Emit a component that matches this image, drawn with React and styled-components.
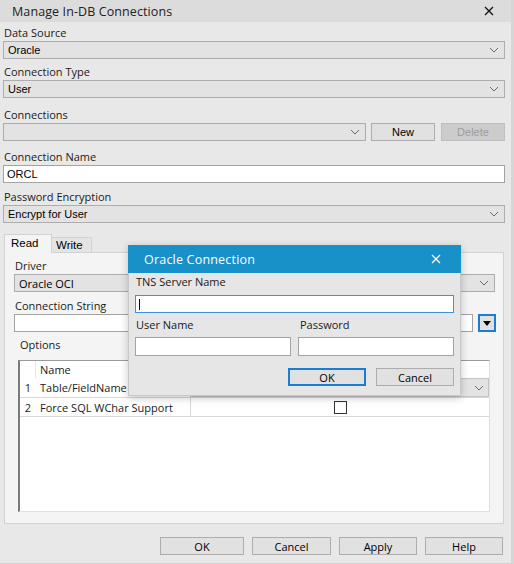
import React from 'react'
import styled, { createGlobalStyle } from 'styled-components'

const GlobalStyle = createGlobalStyle`
  html, body { margin: 0; padding: 0; background: #e8e8e8; }
  * { box-sizing: border-box; }
`

const Chevron = ({ color = '#6a6a6a' }) => (
  <svg width="10" height="6" viewBox="0 0 10 6">
    <polyline points="1,1 5,5 9,1" fill="none" stroke={color} strokeWidth="1" />
  </svg>
)

const CloseIcon = ({ color = '#111', size = 10 }) => (
  <svg width={size} height={size} viewBox="0 0 10 10">
    <path d="M1 1 L9 9 M9 1 L1 9" stroke={color} strokeWidth="1.3" />
  </svg>
)

const App = () => {
  return (
    <>
      <GlobalStyle />
      <Window>
        <TitleBar>
          <Title>Manage In-DB Connections</Title>
          <CloseBox>
            <CloseIcon />
          </CloseBox>
        </TitleBar>
        <Body>
          <Label $top={4}>Data Source</Label>
          <Select>
            <span>Oracle</span>
            <Chevron />
          </Select>
          <Label $top={6}>Connection Type</Label>
          <Select>
            <span>User</span>
            <Chevron />
          </Select>
          <Label $top={10}>Connections</Label>
          <ConnRow>
            <Select $grow>
              <span></span>
              <Chevron />
            </Select>
            <Button $w={64}>New</Button>
            <Button $w={64} $disabled>Delete</Button>
          </ConnRow>
          <Label $top={9}>Connection Name</Label>
          <TextInput>ORCL</TextInput>
          <Label $top={7}>Password Encryption</Label>
          <Select>
            <span>Encrypt for User</span>
            <Chevron />
          </Select>

          <TabStrip>
            <Tab $active>Read</Tab>
            <Tab>Write</Tab>
          </TabStrip>
          <TabPanel>
            <Label $top={6}>Driver</Label>
            <Select $font="'Open Sans', sans-serif" $right={8}>
              <span>Oracle OCI</span>
              <Chevron />
            </Select>
            <Label $top={7}>Connection String</Label>
            <ConnRow>
              <TextInput $grow />
              <DropButton>
                <svg width="8" height="5" viewBox="0 0 8 5">
                  <polygon points="0,0 8,0 4,5" fill="#000" />
                </svg>
              </DropButton>
            </ConnRow>
            <Label $top={6} $left={6}>Options</Label>
            <OptionList>
              <GridRow $head>
                <RowNum $head></RowNum>
                <NameCell>Name</NameCell>
                <ValueCell $head></ValueCell>
              </GridRow>
              <GridRow>
                <RowNum>1</RowNum>
                <NameCell>Table/FieldName Case</NameCell>
                <ValueCell $combo>
                  <Chevron />
                </ValueCell>
              </GridRow>
              <GridRow $line>
                <RowNum>2</RowNum>
                <NameCell>Force SQL WChar Support</NameCell>
                <ValueCell $center>
                  <Check />
                </ValueCell>
              </GridRow>
            </OptionList>
          </TabPanel>

          <Footer>
            <Button $w={84} $font="'Open Sans', sans-serif">OK</Button>
            <Button $w={79} $font="'Open Sans', sans-serif">Cancel</Button>
            <Button $w={78} $font="'Open Sans', sans-serif">Apply</Button>
            <Button $w={78} $font="'Open Sans', sans-serif">Help</Button>
          </Footer>
        </Body>

        <Modal>
          <ModalTitleBar>
            <ModalTitle>Oracle Connection</ModalTitle>
            <CloseIcon color="#fff" size={10} />
          </ModalTitleBar>
          <ModalBody>
            <Label $top={2} $left={1}>TNS Server Name</Label>
            <TextInput $focus $mt={5}>
              <Caret />
            </TextInput>
            <TwoCol>
              <div>
                <Label $top={5} $left={1}>User Name</Label>
                <TextInput $mt={4} $h={19} />
              </div>
              <div>
                <Label $top={5} $left={2}>Password</Label>
                <TextInput $mt={4} $h={19} />
              </div>
            </TwoCol>
            <ModalButtons>
              <Button $w={78} $primary $font="'Open Sans', sans-serif">OK</Button>
              <Button $w={78} $font="'Open Sans', sans-serif">Cancel</Button>
            </ModalButtons>
          </ModalBody>
        </Modal>
      </Window>
    </>
  )
}

export default App

const Window = styled.div`
  position: relative;
  width: 514px;
  height: 564px;
  background: #e8e8e8;
  border-bottom: 1px solid #d0d0d0;
  border-right: 3px solid #d6d6d6;
  font-family: 'Open Sans', 'Noto Sans', sans-serif;
  color: #1a1a1a;
  overflow: hidden;
`
const TitleBar = styled.div`
  height: 22px;
  background: #dcdcdc;
  display: flex;
  align-items: center;
  justify-content: space-between;
  padding: 0 17px 0 12px;
`
const Title = styled.div`
  font-size: 12.5px;
  color: #222;
  letter-spacing: 0.1px;
`
const CloseBox = styled.div`
  display: flex;
  align-items: center;
`
const Label = styled.div`
  height: 15px;
  line-height: 14px;
  margin-top: ${p => p.$top || 0}px;
  padding-left: ${p => (p.$left ?? 1)}px;
  font-size: 11px;
  white-space: nowrap;
`
const Select = styled.div`
  height: 18px;
  ${p => (p.$grow ? 'flex: 1;' : '')}
  margin-right: ${p => p.$right || 0}px;
  background: #e3e3e3;
  border: 1px solid #adadad;
  display: flex;
  align-items: center;
  justify-content: space-between;
  padding: 0 5px 0 4px;
  font-family: ${p => p.$font || "'Liberation Sans', Arial, sans-serif"};
  font-size: 11px;
  color: #000;
`
const TextInput = styled.div`
  height: ${p => p.$h || 18}px;
  margin-top: ${p => p.$mt || 0}px;
  ${p => (p.$grow ? 'flex: 1;' : '')}
  background: #fff;
  border: 1px solid ${p => (p.$focus ? '#3d93d9' : '#a3a3a3')};
  display: flex;
  align-items: center;
  padding: 0 3px;
  font-family: 'Liberation Sans', Arial, sans-serif;
  font-size: 11px;
  color: #000;
`
const Caret = styled.div`
  width: 1px;
  height: 11px;
  background: #000;
`
const Button = styled.div`
  width: ${p => p.$w}px;
  height: 18px;
  flex: none;
  display: flex;
  align-items: center;
  justify-content: center;
  background: ${p => (p.$disabled ? '#cccccc' : '#e1e1e1')};
  border: ${p => (p.$primary ? '2px solid #1b7cd3' : `1px solid ${p.$disabled ? '#bfbfbf' : '#adadad'}`)};
  color: ${p => (p.$disabled ? '#9d9d9d' : '#000')};
  font-family: ${p => p.$font || "'Liberation Sans', Arial, sans-serif"};
  font-size: 11px;
`
const Body = styled.div`
  display: flex;
  flex-direction: column;
  padding: 0 6px 0 3px;
`
const ConnRow = styled.div`
  display: flex;
  align-items: center;
  gap: 5px;
  & > ${Button} + ${Button} {
    margin-left: 1px;
  }
`
const TabStrip = styled.div`
  display: flex;
  align-items: flex-end;
  height: 19px;
  margin-top: 11px;
  padding-left: 1px;
  position: relative;
  z-index: 1;
  margin-bottom: -1px;
`
const Tab = styled.div`
  height: ${p => (p.$active ? 19 : 16)}px;
  width: ${p => (p.$active ? 48 : 40)}px;
  background: ${p => (p.$active ? '#f4f4f4' : '#e4e4e4')};
  border: 1px solid #d2d2d2;
  border-bottom: ${p => (p.$active ? '1px solid #f4f4f4' : '1px solid #d2d2d2')};
  ${p => (p.$active ? '' : 'border-left: none;')}
  font-family: 'Liberation Sans', Arial, sans-serif;
  font-size: 11.5px;
  color: #000;
  display: flex;
  align-items: ${p => (p.$active ? 'flex-start' : 'center')};
  padding: ${p => (p.$active ? '2px 0 0 6px' : '0 0 0 4px')};
`
const TabPanel = styled.div`
  margin-left: 1px;
  width: 500px;
  height: 272px;
  background: #f4f4f4;
  border: 1px solid #d2d2d2;
  padding: 0 0 0 9px;
  display: flex;
  flex-direction: column;
  & > ${ConnRow} {
    padding-right: 7px;
  }
`
const DropButton = styled.div`
  width: 18px;
  height: 18px;
  flex: none;
  border: 2px solid #1b7cd3;
  background: #e1e1e1;
  display: flex;
  align-items: center;
  justify-content: center;
`
const OptionList = styled.div`
  margin: 7px 0 0 4px;
  width: 472px;
  height: 152px;
  background: #fff;
  border-top: 1px solid #9a9a9a;
  border-left: 2px solid #7a7a7a;
  border-right: 1px solid #e0e0e0;
  border-bottom: 1px solid #e0e0e0;
  display: flex;
  flex-direction: column;
`
const GridRow = styled.div`
  display: grid;
  grid-template-columns: 16px 154px 1fr;
  height: ${p => (p.$head ? 17 : 19)}px;
  ${p => (p.$line ? 'border-top: 1px solid #d8d8d8; border-bottom: 1px solid #d8d8d8; height: 20px;' : '')}
  font-size: 11px;
  align-items: stretch;
`
const RowNum = styled.div`
  display: flex;
  align-items: center;
  justify-content: center;
  border-right: ${p => (p.$head ? '1px solid #e4e4e4' : 'none')};
`
const NameCell = styled.div`
  display: flex;
  align-items: center;
  padding-left: 4px;
  white-space: nowrap;
  overflow: hidden;
`
const ValueCell = styled.div`
  display: flex;
  align-items: center;
  justify-content: ${p => (p.$center ? 'center' : 'flex-end')};
  padding-right: ${p => (p.$combo ? 4 : 0)}px;
  background: ${p => (p.$combo ? '#e3e3e3' : 'transparent')};
  border: ${p => (p.$combo ? '1px solid #c4c4c4' : 'none')};
  border-left: ${p => (p.$head ? 'none' : '1px solid #d8d8d8')};
`
const Check = styled.div`
  width: 13px;
  height: 13px;
  border: 1px solid #333;
  background: #fff;
`
const Footer = styled.div`
  display: flex;
  justify-content: flex-end;
  gap: 8px;
  margin-top: 13px;
  padding-right: 2px;
`
const Modal = styled.div`
  position: absolute;
  left: 128px;
  top: 245px;
  width: 333px;
  height: 151px;
  background: #e6e6e6;
  border: 1px solid #c8c8c8;
  border-top: none;
  box-shadow: 0 2px 8px rgba(0, 0, 0, 0.22);
  display: flex;
  flex-direction: column;
`
const ModalTitleBar = styled.div`
  height: 28px;
  margin: 0 -1px;
  background: #1890c8;
  display: flex;
  align-items: center;
  justify-content: space-between;
  padding: 0 20px 0 16px;
`
const ModalTitle = styled.div`
  color: #fff;
  font-size: 12.5px;
  letter-spacing: 0.2px;
`
const ModalBody = styled.div`
  display: flex;
  flex-direction: column;
  padding: 0 6px 0 6px;
`
const TwoCol = styled.div`
  display: grid;
  grid-template-columns: 156px 156px;
  gap: 7px;
`
const ModalButtons = styled.div`
  display: flex;
  justify-content: flex-end;
  gap: 10px;
  margin-top: 12px;
`
